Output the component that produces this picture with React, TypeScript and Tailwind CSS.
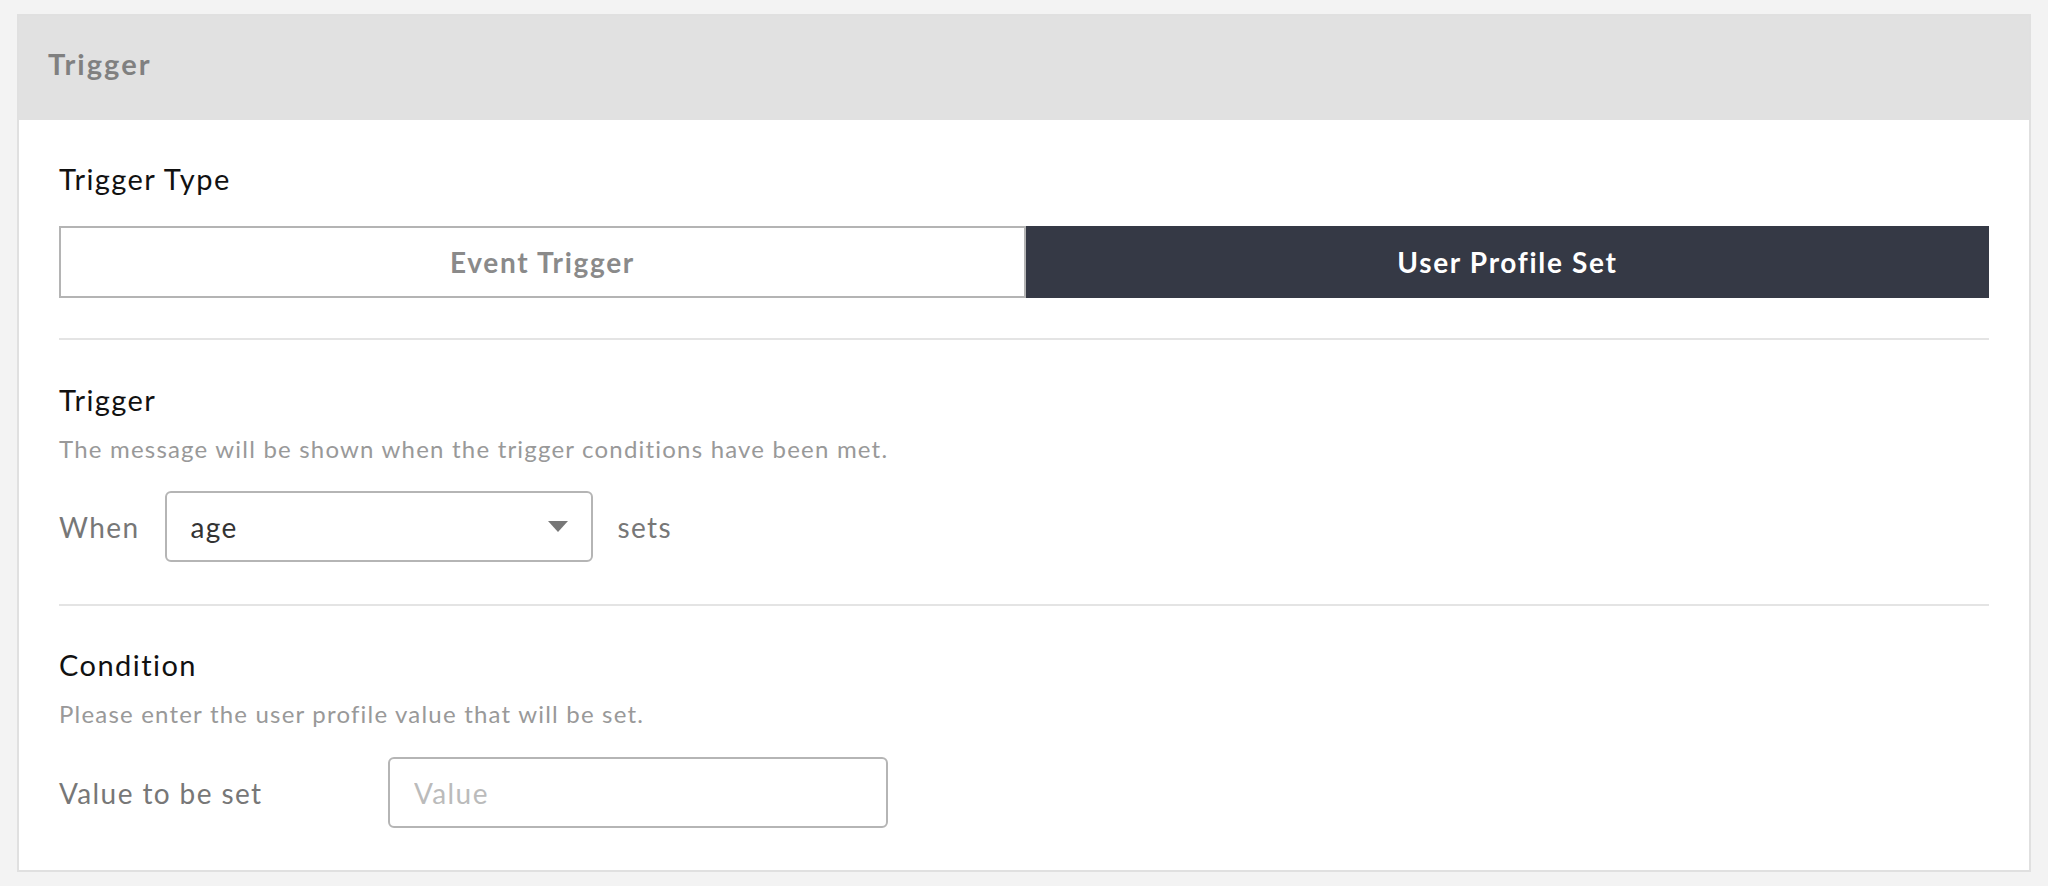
import React from "react";

const FONT = { fontFamily: 'Lato, "Noto Sans", sans-serif' };

function Divider() {
  return <div className="border-t-2 border-[#e4e4e4]" />;
}

function SectionTitle({ title, hint }: { title: string; hint?: string }) {
  return (
    <div>
      <div className="text-[29px] leading-[44px] tracking-[0.05em] text-[#111]">{title}</div>
      {hint && (
        <div className="mt-[11px] text-[24px] leading-[32px] tracking-[0.05em] text-[#999]">{hint}</div>
      )}
    </div>
  );
}

export default function App() {
  return (
    <div className="min-h-screen bg-[#f3f3f3] px-[17px] pt-[14px] pb-[17px]" style={FONT}>
      <div className="border-2 border-[#e0e0e0] bg-white">
        <div className="flex h-[104px] items-center bg-[#e1e1e1] px-[29px] pb-[8px] text-[29px] font-bold tracking-[0.07em] text-[#808080]">
          Trigger
        </div>

        <div className="px-[40px] pt-[37px] pb-[42px]">
          <SectionTitle title="Trigger Type" />
          <div className="mt-[25px] flex h-[72px]">
            <button className="flex flex-1 items-center justify-center border-2 border-[#b4b4b4] bg-white text-[28px] font-bold tracking-[0.06em] text-[#8a8a8a]">
              Event Trigger
            </button>
            <button className="flex flex-1 items-center justify-center bg-[#353945] text-[28px] font-bold tracking-[0.06em] text-white">
              User Profile Set
            </button>
          </div>

          <div className="mt-[40px]">
            <Divider />
          </div>

          <div className="pt-[38px]">
            <SectionTitle
              title="Trigger"
              hint="The message will be shown when the trigger conditions have been met."
            />
            <div className="mt-[26px] flex items-center gap-[25px] text-[28px] tracking-[0.05em] text-[#777]">
              <span>When</span>
              <div className="flex h-[71px] w-[428px] items-center justify-between rounded-[6px] border-2 border-[#b5b5b5] pl-[24px] pr-[23px]">
                <span className="text-[#333]">age</span>
                <svg width="20" height="11" viewBox="0 0 20 11">
                  <path d="M0 0 H20 L10 11 Z" fill="#777" />
                </svg>
              </div>
              <span>sets</span>
            </div>
          </div>

          <div className="mt-[42px]">
            <Divider />
          </div>

          <div className="pt-[37px]">
            <SectionTitle title="Condition" hint="Please enter the user profile value that will be set." />
            <div className="mt-[27px] flex items-center text-[28px] tracking-[0.05em] text-[#777]">
              <span className="w-[329px]">Value to be set</span>
              <input
                placeholder="Value"
                className="h-[71px] w-[500px] rounded-[6px] border-2 border-[#b5b5b5] px-[24px] text-[28px] tracking-[0.05em] text-[#333] outline-none placeholder:text-[#bbb]"
                style={FONT}
              />
            </div>
          </div>
        </div>
      </div>
    </div>
  );
}
